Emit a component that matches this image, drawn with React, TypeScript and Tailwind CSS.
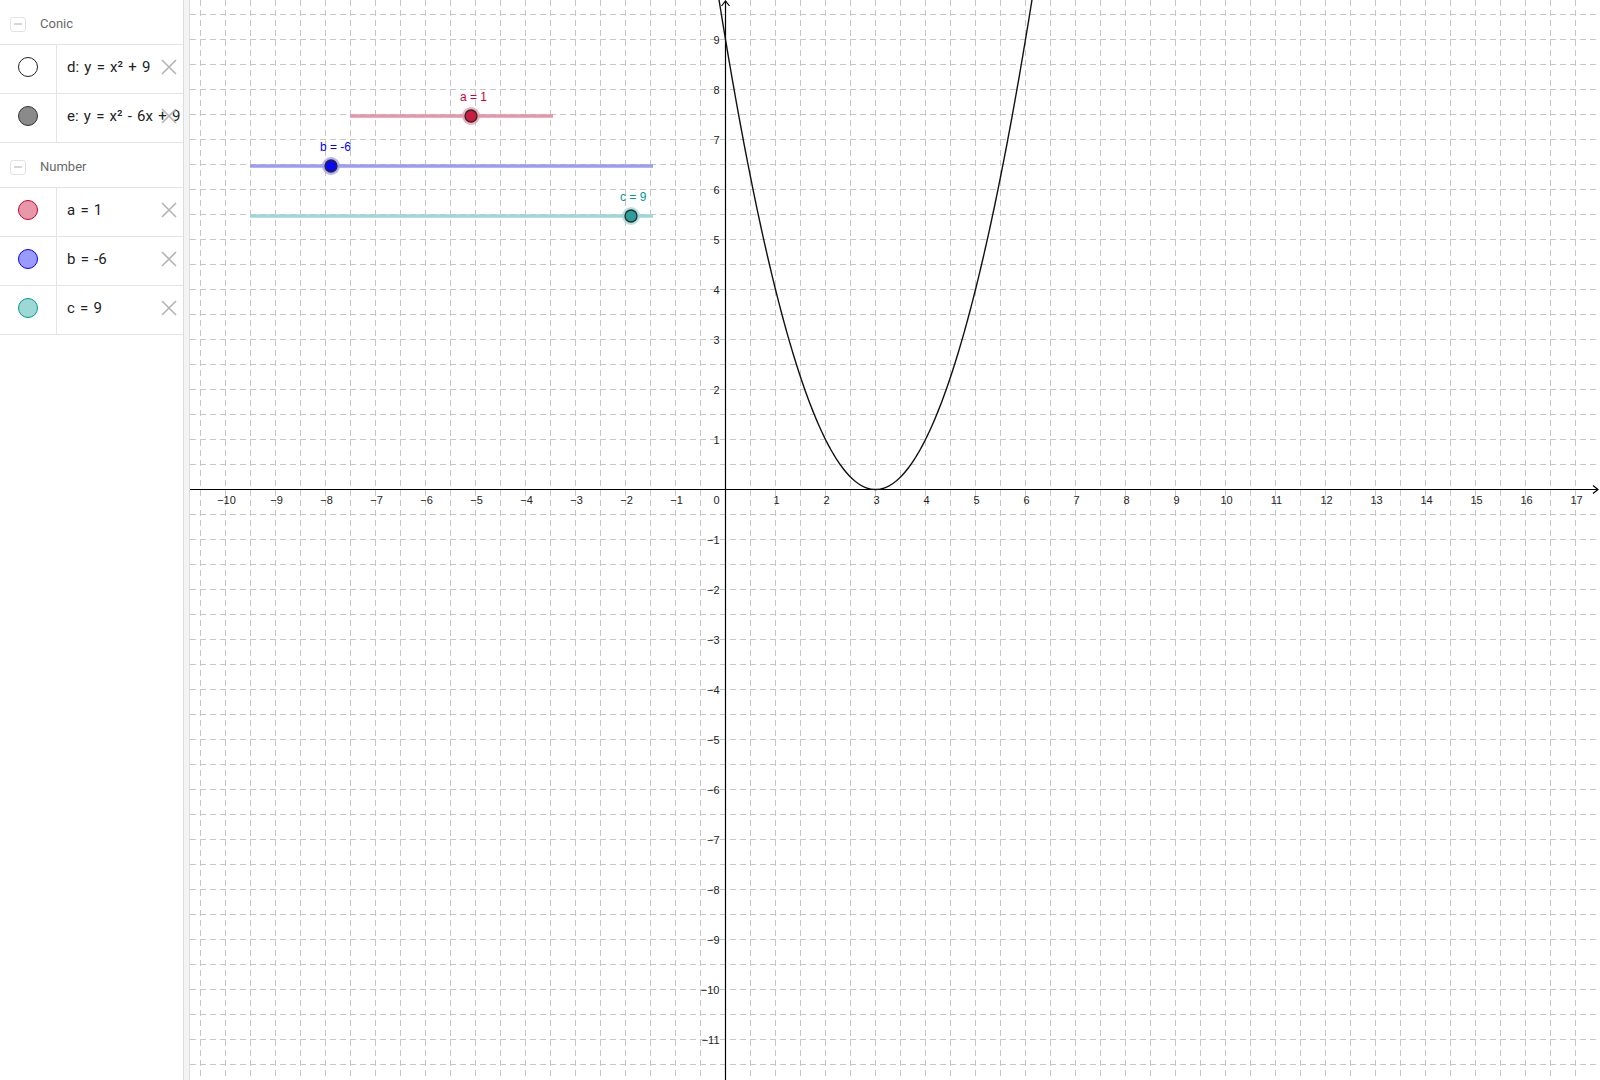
import React from "react";

const OX = 535.5; // graphics-local x of origin (page x 725.5)
const OY = 489.5;
const U = 50;
const W = 1410;
const H = 1080;

function CollapseBox() {
  return (
    <div className="w-[16px] h-[15px] rounded-[3px] border border-[#e2e2e2] flex items-center justify-center">
      <div className="w-[8px] h-[2px] bg-[#d6d6d6]" />
    </div>
  );
}

function Header({ label }: { label: string }) {
  return (
    <div className="h-[45px] flex items-center pl-[10px] pt-[4px] border-b border-[#e4e4e4]">
      <CollapseBox />
      <span className="ml-[14px] text-[13px] text-[#6a6a6a]">{label}</span>
    </div>
  );
}

function CloseX() {
  return (
    <svg width="16" height="16" viewBox="0 0 16 16" className="absolute right-[6px] top-[14px]">
      <path d="M1 1 L15 15 M15 1 L1 15" stroke="#b4b4b4" strokeWidth="1.6" fill="none" />
    </svg>
  );
}

function Row({ fill, border, text }: { fill: string; border: string; text: string }) {
  return (
    <div className="relative h-[49px] flex border-b border-[#e4e4e4]">
      <div className="w-[57px] border-r border-[#e4e4e4] flex items-center justify-center pb-[4px]">
        <div
          className="w-[20px] h-[20px] rounded-full border"
          style={{ background: fill, borderColor: border }}
        />
      </div>
      <div className="flex-1 flex items-center pl-[10px] pb-[4px] overflow-hidden whitespace-nowrap text-[15px] [word-spacing:1.5px] text-[#222]">
        {text}
      </div>
      <CloseX />
    </div>
  );
}

function Slider({
  x1, x2, y, px, label, line, dot, text,
}: { x1: number; x2: number; y: number; px: number; label: string; line: string; dot: string; text: string }) {
  return (
    <g>
      <line x1={x1 - 190} y1={y} x2={x2 - 190} y2={y} stroke={line} strokeWidth="3.5" />
      <circle cx={px - 190} cy={y} r="9" fill={line} opacity="0.75" />
      <circle cx={px - 190} cy={y} r="6" fill={dot} stroke="#2a2a2a" strokeWidth="1.3" />
      <text x={px - 190 - 11} y={y - 15} fontSize="12" fill={text} fontFamily="'Liberation Sans', sans-serif">
        {label}
      </text>
    </g>
  );
}

function Graphics() {
  const vx: number[] = [];
  for (let k = -21; k <= 34; k++) vx.push(OX + 25 * k);
  const hy: number[] = [];
  for (let k = -19; k <= 23; k++) hy.push(OY + 25 * k);

  const pts: string[] = [];
  for (let t = -0.2; t <= 6.2; t += 0.02) {
    pts.push(`${(OX + U * t).toFixed(2)},${(OY - U * (t - 3) * (t - 3)).toFixed(2)}`);
  }

  const xl: number[] = [];
  for (let k = -10; k <= 17; k++) if (k !== 0) xl.push(k);
  const yl: number[] = [];
  for (let k = -11; k <= 9; k++) if (k !== 0) yl.push(k);
  const fmt = (n: number) => (n < 0 ? `\u2212${-n}` : `${n}`);

  return (
    <svg width={W} height={H} className="block">
      <rect width={W} height={H} fill="#ffffff" />
      <g stroke="#c6c6c6" strokeWidth="1" strokeDasharray="6 4">
        {vx.map((x) => (
          <line key={"v" + x} x1={x} y1={0} x2={x} y2={H} />
        ))}
        {hy.map((y) => (
          <line key={"h" + y} x1={0} y1={y} x2={W} y2={y} />
        ))}
      </g>
      {/* axes */}
      <g stroke="#000" strokeWidth="1.2" fill="none">
        <line x1={0} y1={OY} x2={W - 2} y2={OY} />
        <path d={`M${W - 7} ${OY - 4} L${W - 2} ${OY} L${W - 7} ${OY + 4}`} />
        <line x1={OX} y1={1} x2={OX} y2={H} />
        <path d={`M${OX - 4} 6 L${OX} 1 L${OX + 4} 6`} />
      </g>
      <g fontSize="11" fill="#222" fontFamily="'Liberation Sans', sans-serif">
        {xl.map((k) => (
          <text key={"x" + k} x={OX + U * k + 1} y={OY + 14} textAnchor="middle">
            {fmt(k)}
          </text>
        ))}
        {yl.map((k) => (
          <text key={"y" + k} x={OX - 6} y={OY - U * k + 4} textAnchor="end">
            {fmt(k)}
          </text>
        ))}
        <text x={OX - 6} y={OY + 14} textAnchor="end">0</text>
      </g>
      <polyline points={pts.join(" ")} fill="none" stroke="#111" strokeWidth="1.4" />
      <Slider x1={350} x2={553} y={116} px={471} label="a = 1" line="#e397a8" dot="#cc1a40" text="#cc0033" />
      <Slider x1={250} x2={653} y={166} px={331} label="b = -6" line="#9c9cf2" dot="#0a0aee" text="#0000ff" />
      <Slider x1={250} x2={653} y={216} px={631} label="c = 9" line="#9fd6d8" dot="#2a9f9c" text="#009999" />
    </svg>
  );
}

export default function App() {
  return (
    <div className="w-[1600px] h-[1080px] flex overflow-hidden bg-white" style={{ fontFamily: "Roboto, 'Noto Sans', sans-serif" }}>
      {/* algebra view */}
      <div className="w-[183px] shrink-0 bg-white">
        <Header label="Conic" />
        <Row fill="#ffffff" border="#222" text="d: y = x² + 9" />
        <Row fill="#8a8a8a" border="#333" text="e: y = x² - 6x + 9" />
        <Header label="Number" />
        <Row fill="#e899a9" border="#cc0033" text="a = 1" />
        <Row fill="#9a9aff" border="#0000ff" text="b = -6" />
        <Row fill="#9dd8d5" border="#009999" text="c = 9" />
      </div>
      {/* splitter */}
      <div className="w-[7px] shrink-0 bg-[#f4f4f4] border-l border-r border-[#dcdcdc]" />
      {/* graphics view */}
      <div className="flex-1 overflow-hidden">
        <Graphics />
      </div>
    </div>
  );
}
